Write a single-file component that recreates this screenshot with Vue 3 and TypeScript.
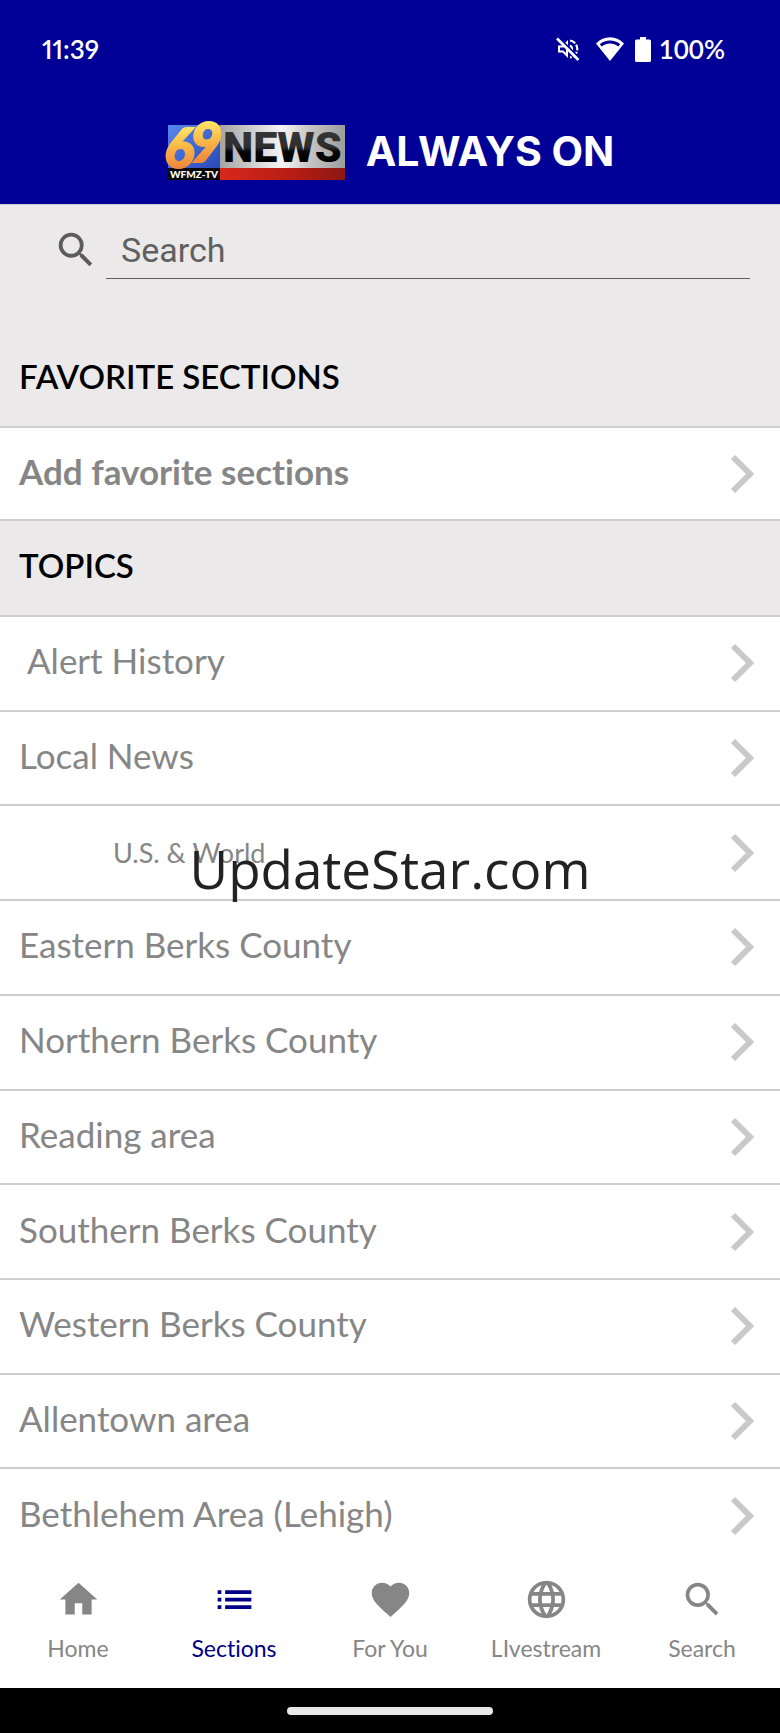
<script setup lang="ts">
import { ref } from 'vue'

interface Topic {
  label: string
  kind?: 'indented' | 'nested'
}

interface Tab {
  label: string
  path: string
}

const query = ref('')
const activeTab = ref('Sections')

const topics: Topic[] = [
  { label: 'Alert History', kind: 'indented' },
  { label: 'Local News' },
  { label: 'U.S. & World', kind: 'nested' },
  { label: 'Eastern Berks County' },
  { label: 'Northern Berks County' },
  { label: 'Reading area' },
  { label: 'Southern Berks County' },
  { label: 'Western Berks County' },
  { label: 'Allentown area' },
  { label: 'Bethlehem Area (Lehigh)' },
]

const magnifier =
  'M15.5 14h-.79l-.28-.27A6.47 6.47 0 0 0 16 9.5 6.5 6.5 0 1 0 9.5 16c1.61 0 3.09-.59 4.23-1.57l.27.28v.79l5 4.99L20.49 19l-4.99-5zm-6 0C7.01 14 5 11.99 5 9.5S7.01 5 9.5 5 14 7.01 14 9.5 11.99 14 9.5 14z'

const tabs: Tab[] = [
  { label: 'Home', path: 'M10 20v-6h4v6h5v-8h3L12 3 2 12h3v8z' },
  { label: 'Sections', path: 'M3 13h2v-2H3v2zm0 4h2v-2H3v2zm0-8h2V7H3v2zm4 4h14v-2H7v2zm0 4h14v-2H7v2zM7 7v2h14V7H7z' },
  {
    label: 'For You',
    path: 'M12 21.35l-1.45-1.32C5.4 15.36 2 12.28 2 8.5 2 5.42 4.42 3 7.5 3c1.74 0 3.41.81 4.5 2.09C13.09 3.81 14.76 3 16.5 3 19.58 3 22 5.42 22 8.5c0 3.78-3.4 6.86-8.55 11.54L12 21.35z',
  },
  {
    label: 'LIvestream',
    path: 'M11.99 2C6.47 2 2 6.48 2 12s4.47 10 9.99 10C17.52 22 22 17.52 22 12S17.52 2 11.99 2zm6.93 6h-2.95c-.32-1.25-.78-2.45-1.38-3.56 1.84.63 3.37 1.91 4.33 3.56zM12 4.04c.83 1.2 1.48 2.53 1.91 3.96h-3.82c.43-1.43 1.08-2.76 1.91-3.96zM4.26 14C4.1 13.36 4 12.69 4 12s.1-1.36.26-2h3.38c-.08.66-.14 1.32-.14 2s.06 1.34.14 2H4.26zm.82 2h2.95c.32 1.25.78 2.45 1.38 3.56-1.84-.63-3.37-1.9-4.33-3.56zm2.95-8H5.08c.96-1.66 2.49-2.93 4.33-3.56C8.81 5.55 8.35 6.75 8.03 8zM12 19.96c-.83-1.2-1.48-2.53-1.91-3.96h3.82c-.43 1.43-1.08 2.76-1.91 3.96zM14.34 14H9.66c-.09-.66-.16-1.32-.16-2s.07-1.35.16-2h4.68c.09.65.16 1.32.16 2s-.07 1.34-.16 2zm.25 5.56c.6-1.11 1.06-2.31 1.38-3.56h2.95c-.96 1.65-2.49 2.93-4.33 3.56zM16.36 14c.08-.66.14-1.32.14-2s-.06-1.34-.14-2h3.38c.16.64.26 1.31.26 2s-.1 1.36-.26 2h-3.38z',
  },
  { label: 'Search', path: magnifier },
]
</script>

<template>
  <div class="screen">
    <header class="top">
      <div class="status">
        <span class="clock">11:39</span>
        <div class="indicators">
          <svg class="mute" viewBox="0 0 24 24" aria-hidden="true">
            <path d="M3 9.5h4l4-4v13l-4-4H3z" fill="none" stroke="#fff" stroke-width="2" />
            <path d="M14 3.5a8.6 8.6 0 0 1 0 17M14 8.5a4 4 0 0 1 0 7" fill="none" stroke="#fff" stroke-width="2.2" stroke-dasharray="6 1.5" />
            <path d="M2.5 0.5l21 21" stroke="#000096" stroke-width="2.4" />
            <path d="M1 1.5l21.5 21.5" stroke="#fff" stroke-width="2.6" />
          </svg>
          <svg class="wifi" viewBox="0 0 28 24" aria-hidden="true">
            <path d="M0 6.5C8-1.8 20-1.8 28 6.5L14 24z" fill="#fff" />
            <path d="M3.8 7.2C9.5 2.2 18.5 2.2 24.2 7.2L22.3 9.6C17.5 5.6 10.5 5.6 5.7 9.6z" fill="#000096" />
          </svg>
          <svg class="battery" viewBox="0 0 16 25" aria-hidden="true">
            <path d="M5 0h6v2.5h3.5Q16 2.5 16 4v19.5q0 1.5-1.5 1.5h-13Q0 25 0 23.5V4q0-1.5 1.5-1.5H5z" fill="#fff" />
          </svg>
          <span class="percent">100%</span>
        </div>
      </div>
      <div class="brand">
        <svg class="logo" viewBox="0 0 180 60" role="img" aria-label="69 News WFMZ-TV">
          <defs>
            <linearGradient id="gold" x1="0" y1="0" x2="0" y2="1">
              <stop offset="0.2" stop-color="#ffe768" />
              <stop offset="0.5" stop-color="#f8b848" />
              <stop offset="0.8" stop-color="#f08a3c" />
            </linearGradient>
            <linearGradient id="sky" x1="0" y1="0" x2="1" y2="1">
              <stop offset="0" stop-color="#5b86ee" />
              <stop offset="1" stop-color="#2748b8" />
            </linearGradient>
            <linearGradient id="silver" x1="0" y1="0" x2="1" y2="0">
              <stop offset="0" stop-color="#a4a4a4" />
              <stop offset="0.35" stop-color="#dedede" />
              <stop offset="0.5" stop-color="#f4f4f4" />
              <stop offset="0.7" stop-color="#c8c8c8" />
              <stop offset="1" stop-color="#9c9c9c" />
            </linearGradient>
            <linearGradient id="ink" x1="0" y1="0" x2="0" y2="1">
              <stop offset="0" stop-color="#3a3a3a" />
              <stop offset="0.5" stop-color="#2e2e2e" />
              <stop offset="0.6" stop-color="#050505" />
              <stop offset="1" stop-color="#000" />
            </linearGradient>
            <linearGradient id="red" x1="0" y1="0" x2="1" y2="0">
              <stop offset="0" stop-color="#d8281c" />
              <stop offset="0.6" stop-color="#b51c14" />
              <stop offset="1" stop-color="#8c1812" />
            </linearGradient>
          </defs>
          <rect x="2" y="4" width="53" height="43" fill="url(#sky)" />
          <rect x="2" y="47" width="53" height="12" fill="#080808" />
          <rect x="54" y="4" width="125" height="43" fill="url(#silver)" />
          <rect x="54" y="47" width="125" height="12" fill="url(#red)" />
          <text class="wordmark" x="57" y="41" fill="url(#ink)">NEWS</text>
          <text class="numeral" x="-2" y="47">6</text>
          <text class="numeral" x="24" y="41">9</text>
          <text class="callsign" x="4" y="57" fill="#fff">WFMZ-TV</text>
        </svg>
        <span class="tagline">ALWAYS ON</span>
      </div>
    </header>

    <main class="content">
      <form class="search" role="search" @submit.prevent>
        <label for="query" aria-label="Search sections">
          <svg viewBox="0 0 24 24" aria-hidden="true"><path :d="magnifier" /></svg>
        </label>
        <input id="query" v-model="query" type="text" placeholder="Search" />
      </form>

      <h2 class="heading favorites">FAVORITE SECTIONS</h2>
      <button class="row add" type="button">
        <span>Add favorite sections</span>
        <svg class="chevron" viewBox="0 0 24 40" aria-hidden="true"><path d="M3 3l17 17L3 37" /></svg>
      </button>

      <h2 class="heading">TOPICS</h2>
      <nav class="topics" aria-label="Topics">
        <a v-for="topic in topics" :key="topic.label" class="row" :class="topic.kind" href="#">
          <span>{{ topic.label }}</span>
          <svg class="chevron" viewBox="0 0 24 40" aria-hidden="true"><path d="M3 3l17 17L3 37" /></svg>
        </a>
      </nav>
    </main>

    <nav class="tabs" aria-label="Main">
      <button
        v-for="tab in tabs"
        :key="tab.label"
        type="button"
        class="tab"
        :class="{ active: tab.label === activeTab }"
        @click="activeTab = tab.label"
      >
        <svg viewBox="0 0 24 24" aria-hidden="true"><path :d="tab.path" /></svg>
        <span>{{ tab.label }}</span>
      </button>
    </nav>
    <div class="system"><div class="handle"></div></div>

    <div class="watermark">UpdateStar.com</div>
  </div>
</template>

<style>
body {
  margin: 0;
}
</style>

<style scoped>
.screen {
  position: relative;
  display: flex;
  flex-direction: column;
  min-height: 100vh;
  background: #fff;
  color: #868686;
  font-family: Lato, 'Liberation Sans', sans-serif;
}

.screen * {
  box-sizing: border-box;
  font-variant-ligatures: none;
}

.top {
  height: 204px;
  background: #000096;
  color: #fff;
}

.status {
  display: flex;
  align-items: center;
  justify-content: space-between;
  height: 98px;
  padding: 0 55px 0 42px;
  font-size: 26px;
  font-weight: 600;
}

.clock {
  font-variant-numeric: proportional-nums;
}

.indicators {
  display: flex;
  align-items: center;
}

.mute {
  width: 24px;
  height: 24px;
  margin-right: 16px;
}

.wifi {
  width: 28px;
  height: 24px;
  margin-right: 11px;
}

.battery {
  width: 16px;
  height: 25px;
  margin-right: 8px;
}

.brand {
  display: flex;
  align-items: center;
  justify-content: center;
  gap: 20px;
  height: 106px;
}

.logo {
  width: 180px;
  height: 60px;
  overflow: visible;
}

.wordmark {
  font: 900 43px Roboto, sans-serif;
}

.numeral {
  font: italic 900 56px Lato, sans-serif;
  fill: url(#gold);
  stroke: url(#gold);
  stroke-width: 2px;
}

.callsign {
  font: 900 10px Lato, sans-serif;
}

.tagline {
  font-family: Inter, sans-serif;
  font-size: 41px;
  font-weight: 700;
}

.content {
  display: flex;
  flex: 1;
  flex-direction: column;
  background: #ebe9ea;
  border-top: 1px solid #c9c9d4;
}

.search {
  display: flex;
  align-items: center;
  padding: 15px 30px 0 53px;
}

.search label {
  display: flex;
  margin-right: 7px;
}

.search label svg {
  width: 46px;
  height: 46px;
  fill: #5c5c5c;
}

.search input {
  flex: 1;
  min-width: 0;
  height: 59px;
  padding: 2px 15px 0;
  border: 0;
  border-bottom: 1px solid #5c5c5c;
  background: transparent;
  color: #606060;
  font: 34px Roboto, sans-serif;
  outline: none;
}

.search input::placeholder {
  color: #606060;
  opacity: 1;
}

.heading {
  display: flex;
  align-items: center;
  height: 96px;
  margin: 0;
  padding: 0 19px 6px;
  border-bottom: 2px solid #cecece;
  color: #000;
  font-size: 33px;
  font-weight: 600;
}

.favorites {
  height: 149px;
  padding-top: 53px;
}

.row {
  display: flex;
  align-items: center;
  justify-content: space-between;
  width: 100%;
  padding: 0 26px 0 19px;
  border: 0;
  border-bottom: 2px solid #cecece;
  background: #fff;
  color: #868686;
  font-family: inherit;
  font-size: 35px;
  line-height: 44px;
  text-decoration: none;
}

.row span {
  padding-bottom: 6px;
}

.add {
  height: 93px;
  font-weight: 700;
}

.topics {
  display: flex;
  flex: 1;
  flex-direction: column;
}

.topics .row {
  flex: 1;
}

.topics .row:last-child {
  border-bottom: 0;
}

.topics .indented {
  padding-left: 27px;
}

.topics .nested {
  padding-left: 113px;
  font-size: 27px;
}

.topics .nested span {
  padding: 3px 0;
}

.chevron {
  width: 24px;
  height: 40px;
  fill: none;
  stroke: #c9c9c9;
  stroke-width: 6px;
}

.tabs {
  display: flex;
  height: 126px;
  background: #fff;
}

.tab {
  display: flex;
  flex: 1;
  flex-direction: column;
  align-items: center;
  gap: 12px;
  padding: 15px 0 0;
  border: 0;
  background: none;
  color: #868686;
  font-family: inherit;
  font-size: 23px;
  line-height: 28px;
}

.tab svg {
  width: 45px;
  height: 45px;
  fill: currentColor;
}

.tab.active {
  color: #000087;
}

.system {
  display: flex;
  align-items: center;
  justify-content: center;
  height: 45px;
  background: #000;
}

.handle {
  width: 206px;
  height: 8px;
  border-radius: 4px;
  background: #e8e8e8;
}

.watermark {
  position: absolute;
  inset: 0;
  display: flex;
  align-items: center;
  justify-content: center;
  padding-top: 4px;
  color: #222;
  font: 53px 'Open Sans', sans-serif;
  pointer-events: none;
}
</style>
